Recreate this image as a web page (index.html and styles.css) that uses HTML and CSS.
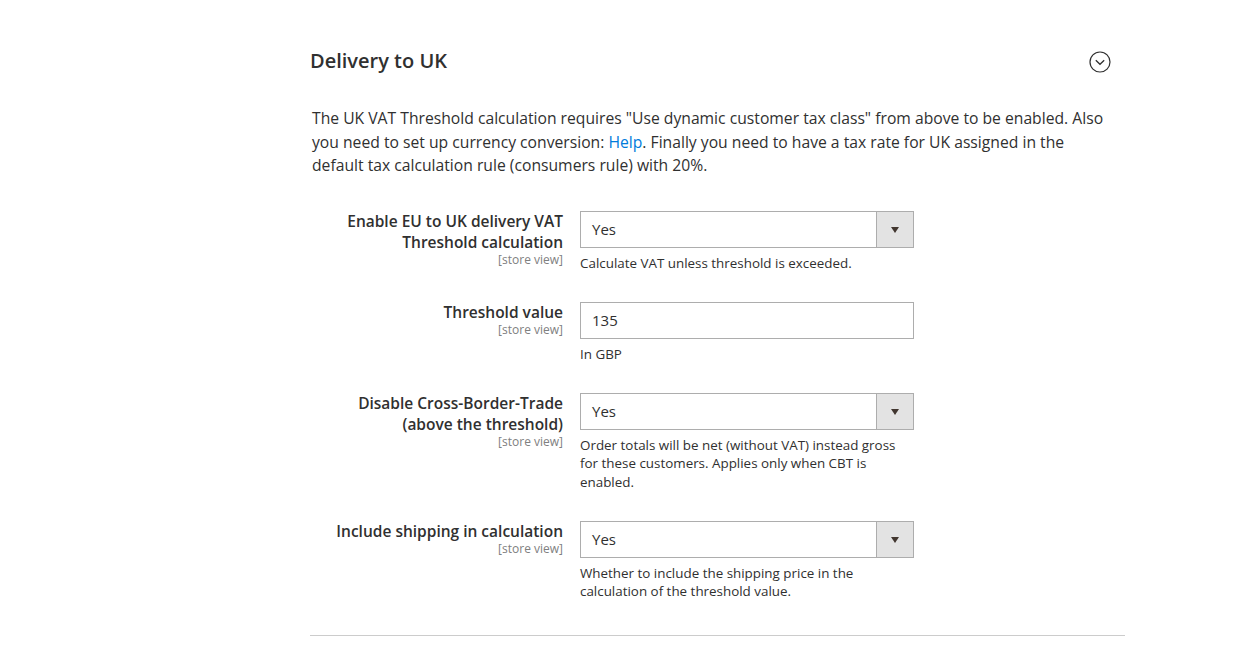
FILE: index.html
```html
<!DOCTYPE html>
<html lang="en">
<head>
<meta charset="utf-8">
<title>Delivery to UK</title>
<link rel="stylesheet" href="styles.css">
</head>
<body>
<div class="section">
  <div class="section-head">
    <h2 class="section-title">Delivery to UK</h2>
    <span class="toggle">
      <svg width="22" height="22" viewBox="0 0 22 22"><circle cx="11" cy="11" r="10" fill="none" stroke="#303030" stroke-width="1.2"/><path d="M6.8 9.3 L11 13.3 L15.2 9.3" fill="none" stroke="#303030" stroke-width="1.3"/></svg>
    </span>
  </div>
  <p class="intro">The UK VAT Threshold calculation requires "Use dynamic customer tax class" from above to be enabled. Also you need to set up currency conversion: <a href="#" class="link">Help</a>. Finally you need to have a tax rate for UK assigned in the default tax calculation rule (consumers rule) with 20%.</p>

  <div class="fields">
    <div class="field">
      <div class="label"><span class="label-text">Enable EU to UK delivery VAT Threshold calculation</span><span class="scope">[store view]</span></div>
      <div class="control">
        <div class="select"><span class="value">Yes</span><span class="arrow"></span></div>
        <p class="note">Calculate VAT unless threshold is exceeded.</p>
      </div>
    </div>
    <div class="field">
      <div class="label"><span class="label-text">Threshold value</span><span class="scope">[store view]</span></div>
      <div class="control">
        <div class="input"><span class="value">135</span></div>
        <p class="note">In GBP</p>
      </div>
    </div>
    <div class="field">
      <div class="label"><span class="label-text">Disable Cross-Border-Trade (above the threshold)</span><span class="scope">[store view]</span></div>
      <div class="control">
        <div class="select"><span class="value">Yes</span><span class="arrow"></span></div>
        <p class="note">Order totals will be net (without VAT) instead gross for these customers. Applies only when CBT is enabled.</p>
      </div>
    </div>
    <div class="field">
      <div class="label"><span class="label-text">Include shipping in calculation</span><span class="scope">[store view]</span></div>
      <div class="control">
        <div class="select"><span class="value">Yes</span><span class="arrow"></span></div>
        <p class="note">Whether to include the shipping price in the calculation of the threshold value.</p>
      </div>
    </div>
  </div>
</div>
</body>
</html>
```
FILE: styles.css
```css
* { box-sizing: border-box; }
body {
  margin: 0;
  background: #fff;
  font-family: "Open Sans", "Noto Sans", sans-serif;
  color: #303030;
}
.section {
  width: 815px;
  margin-left: 310px;
  padding-top: 47px;
  padding-bottom: 0;
  border-bottom: 1px solid #cccccc;
}
.section-head {
  display: flex;
  align-items: center;
  justify-content: space-between;
  padding-right: 14px;
}
.section-title {
  margin: 0;
  font-size: 20px;
  font-weight: 600;
  line-height: 28px;
  color: #303030;
}
.toggle { display: flex; margin-top: 2px; }
.intro {
  margin: 32px 0 0 2px;
  max-width: 798px;
  font-size: 15.7px;
  line-height: 23.5px;
  color: #303030;
}
.link { color: #007bdb; text-decoration: none; }
.fields {
  margin-top: 33px;
  padding-bottom: 34px;
  display: flex;
  flex-direction: column;
  gap: 29.6px;
}
.field {
  display: grid;
  grid-template-columns: 253px 334px;
  column-gap: 17px;
}
.label {
  display: flex;
  flex-direction: column;
  align-items: flex-end;
  text-align: right;
}
.label-text {
  font-size: 15.5px;
  font-weight: 600;
  line-height: 21px;
  color: #303030;
}
.scope {
  font-size: 12px;
  line-height: 14px;
  color: #808080;
}
.select, .input {
  height: 37px;
  border: 1px solid #adadad;
  display: flex;
  align-items: center;
  background: #fff;
}
.value {
  flex: 1;
  padding-left: 11px;
  font-size: 15px;
  color: #303030;
}
.arrow {
  width: 37px;
  height: 100%;
  background: #e3e3e3;
  border-left: 1px solid #adadad;
  position: relative;
}
.arrow::after {
  content: "";
  position: absolute;
  left: 14px;
  top: 15px;
  border-left: 4.5px solid transparent;
  border-right: 4.5px solid transparent;
  border-top: 6px solid #41362f;
}
.note {
  margin: 6px 0 0;
  font-size: 13.4px;
  line-height: 18.5px;
  color: #303030;
}
```
